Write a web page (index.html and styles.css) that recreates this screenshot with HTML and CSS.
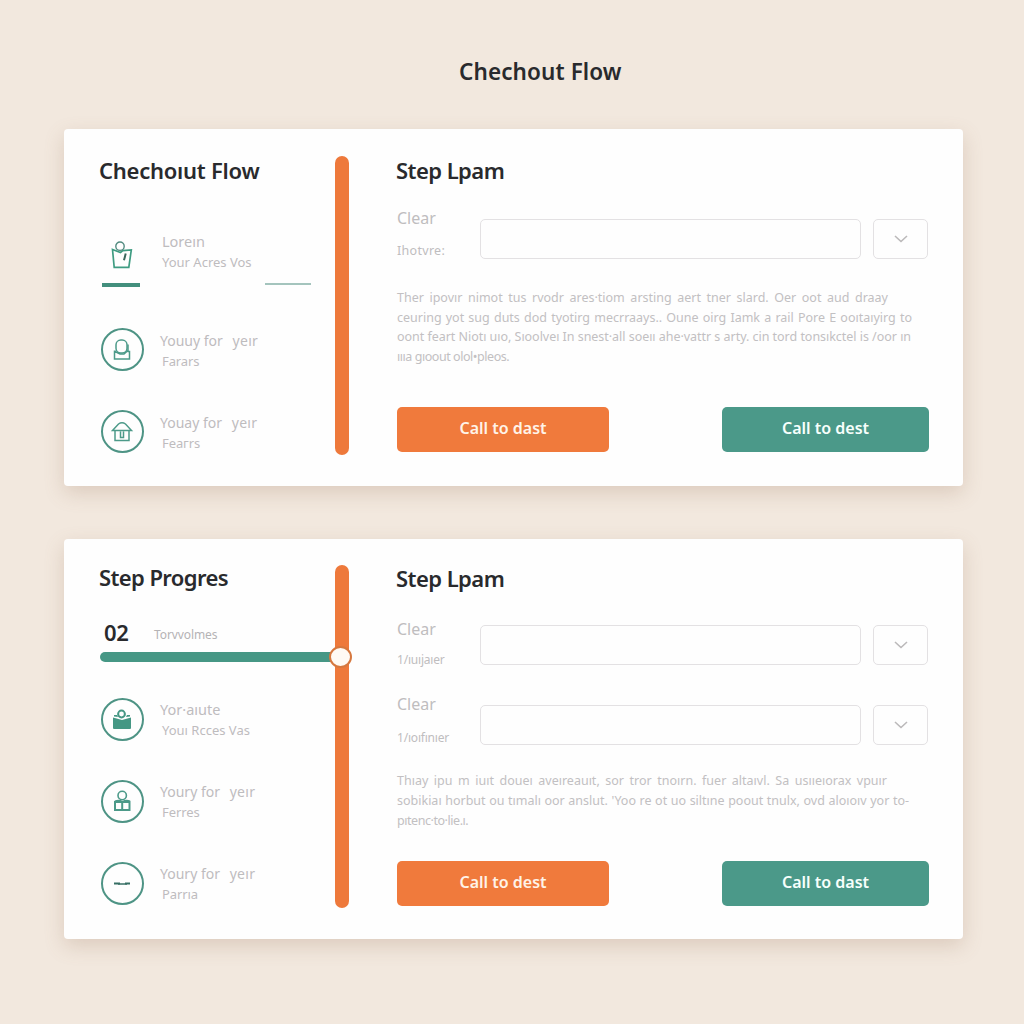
FILE: index.html
```html
<!DOCTYPE html>
<html lang="en">
<head>
<meta charset="utf-8">
<title>Chechout Flow</title>
<link rel="stylesheet" href="styles.css">
</head>
<body>
<h1 class="page-title">Chechout Flow</h1>
<main class="cards">
  <section class="card card-first">
    <div class="steps">
      <h2 class="title title-flow">Chechoıut Flow</h2>
      <div class="step step-active">
        <div class="mark">
          <svg class="bag" width="24" height="32" viewBox="0 0 24 32" fill="none" stroke="#3f9c82" stroke-width="1.7"><path d="M2.5 10.500 4.200 28.300h14.600L21.300 11l-8.500.7-2.300 1.800z"/><path d="M15.700 14.500l-1.700 6.800" stroke="#39665c" stroke-width="2"/><circle cx="10" cy="7.200" r="4.200" stroke="#528b80" stroke-width="1.400"/></svg>
          <i class="underline"></i>
        </div>
        <div class="step-text"><p class="name">Loreın</p><p class="sub">Your Acres Vos</p></div>
        <i class="dash"></i>
      </div>
      <div class="step">
        <div class="ring"><svg width="24" height="24" viewBox="0 0 24 24" fill="none" stroke="#4c9a89" stroke-width="1.500"><path d="M6 13.300H4.500V21h15v-7.500h-2M5 13.500l5 2.500h4l4-3.500V6.500"/><rect x="6" y="2" width="11" height="13" rx="4.800"/></svg></div>
        <div class="step-text"><p class="name n-for">Youuy for <span>yeır</span></p><p class="sub s-one">Farars</p></div>
      </div>
      <div class="step">
        <div class="ring"><svg width="24" height="24" viewBox="0 0 24 24" fill="none" stroke="#4c9a89" stroke-width="1.500"><path d="M2.500 10.500 8.500 4Q12 1.500 15.500 4l6 6.500zM5 10.500V20.500h14v-10M10.500 11.500V17.500h3v-6"/></svg></div>
        <div class="step-text"><p class="name n-for">Youay for <span>yeır</span></p><p class="sub s-one">Feaгrs</p></div>
      </div>
    </div>
    <div class="divider"></div>
    <div class="detail">
      <h2 class="title">Step Lpam</h2>
      <div class="field">
        <div class="labels"><p class="label">Clear</p><p class="hint">Ihotvre:</p></div>
        <div class="input"></div>
        <div class="select"><svg width="14" height="10" viewBox="0 0 14 10" fill="none" stroke="#bbb9ba" stroke-width="1.600"><path d="M1 2l6 5.500L13 2"/></svg></div>
      </div>
      <div class="copy">
        <p class="l1">Ther ipovır nimot tus rvodr ares·tiom arsting aert tner slard. Oer oot aud draay</p>
        <p class="l2">ceuring yot sug duts dod tyotirg mecrraays.. Oune oirg Iamk a rail Pore E ooıtaıyirg to</p>
        <p class="l3">oont feart Niotı uıo, Sıoolveı In snest·all soeıı ahe·vattr s arty. cin tord tonsıkctel is /oor ın</p>
        <p class="l4">ıııa gıoout olol•pleos.</p>
      </div>
      <div class="actions"><div class="btn orange">Call to dast</div><div class="btn green">Call to dest</div></div>
    </div>
  </section>

  <section class="card card-second">
    <div class="steps">
      <h2 class="title title-progress">Step Progres</h2>
      <div class="count"><b>02</b><span>Torvvolmes</span></div>
      <div class="progress"><i class="knob"></i></div>
      <div class="step">
        <div class="ring"><svg width="24" height="24" viewBox="0 0 24 24" fill="#459784"><path d="M3 9.500 12 12l9-2.500V20q0 1-1 1H4q-1 0-1-1zM4 7h3l1 2-4-.5zM17 7h3v1.500L16 9z"/><circle cx="11.500" cy="6" r="3.400" fill="none" stroke="#459784" stroke-width="2"/></svg></div>
        <div class="step-text"><p class="name">Yor·aıute</p><p class="sub">Youı Rcces Vas</p></div>
      </div>
      <div class="step">
        <div class="ring"><svg width="24" height="24" viewBox="0 0 24 24" fill="none" stroke="#4c9a89" stroke-width="1.600"><circle cx="12.200" cy="5.500" r="4.200"/><path d="M5 12h14.500V20H5zM5 11.500q4-1.500 7.500.5Q16 10 20 11.500M12.200 12.500v7.500" stroke-width="2"/></svg></div>
        <div class="step-text"><p class="name n-for">Youry for <span>yeır</span></p><p class="sub s-one">Ferres</p></div>
      </div>
      <div class="step">
        <div class="ring"><svg width="24" height="24" viewBox="0 0 24 24" fill="none" stroke="#376f64" stroke-width="2"><path d="M4 11.500h6M15 11.500h5"/><path d="M8 12h9" stroke-width="1.500"/></svg></div>
        <div class="step-text"><p class="name n-for">Youry for <span>yeır</span></p><p class="sub s-one">Parrıa</p></div>
      </div>
    </div>
    <div class="divider"></div>
    <div class="detail">
      <h2 class="title">Step Lpam</h2>
      <div class="field">
        <div class="labels"><p class="label">Clear</p><p class="hint">1/ıuıjaıer</p></div>
        <div class="input"></div>
        <div class="select"><svg width="14" height="10" viewBox="0 0 14 10" fill="none" stroke="#bbb9ba" stroke-width="1.600"><path d="M1 2l6 5.500L13 2"/></svg></div>
      </div>
      <div class="field field-last">
        <div class="labels"><p class="label">Clear</p><p class="hint">1/ıoıfınıer</p></div>
        <div class="input"></div>
        <div class="select"><svg width="14" height="10" viewBox="0 0 14 10" fill="none" stroke="#bbb9ba" stroke-width="1.600"><path d="M1 2l6 5.500L13 2"/></svg></div>
      </div>
      <div class="copy">
        <p class="m1">Thıay ipu m iuıt doueı aveıreauıt, sor tror tnoırn. fuer altaıvl. Sa usııeıorax vpuır</p>
        <p class="m2">sobikiaı horbut ou tımalı oor anslut. 'Yoo re ot uo siltıne poout tnulx, ovd aloıoıv yor to-</p>
        <p class="m3">pıtenc·to·lie.ı.</p>
      </div>
      <div class="actions"><div class="btn orange">Call to dest</div><div class="btn green">Call to dast</div></div>
    </div>
  </section>
</main>
</body>
</html>
```
FILE: styles.css
```css
* { box-sizing: border-box; }
body {
  margin: 0;
  height: 1024px;
  overflow: hidden;
  background: #f2e8de;
  color: #292a2d;
  font-family: "Noto Sans", "Open Sans", sans-serif;
}
h1, h2, p { margin: 0; }
svg { display: block; }
.page-title {
  height: 129px;
  padding: 57px 0 0 459px;
  font-size: 22.500px;
  line-height: 30px;
  font-weight: 600;
  letter-spacing: .1px;
  white-space: nowrap;
}
.cards { display: flex; flex-direction: column; gap: 53px; padding-left: 64px; }
.card {
  display: flex;
  width: 899px;
  background: #fefefe;
  border-radius: 4px;
  box-shadow: 0 7px 20px rgba(145, 110, 80, .23);
}
.card-first { height: 357px; padding-top: 27px; }
.card-second { height: 400px; padding-top: 26px; }
.steps { width: 271px; padding-left: 35px; }
.title { font-size: 22px; line-height: 28px; font-weight: 600; white-space: nowrap; }
.title-flow { letter-spacing: -.25px; }
.title-progress { margin-top: -2px; letter-spacing: -.6px; }
.divider { width: 14px; border-radius: 7px; background: #ee793b; }
.card-first .divider { height: 299px; }
.card-second .divider { height: 343px; }
.detail { width: 532px; margin-left: 48px; }
.detail .title { margin-left: -1px; letter-spacing: -.55px; }
.card-first .title { margin-bottom: 35px; }
.card-first .detail .title { margin-bottom: 21px; }
.card-second .detail .title { margin: -1px 0 33px -1px; }

.step { display: flex; height: 82px; padding: 10px 0 0 2px; }
.ring {
  display: flex;
  align-items: center;
  justify-content: center;
  width: 43px;
  height: 43px;
  padding-right: 1px;
  border: 2px solid #4e9485;
  border-radius: 50%;
}
.step-text { padding: 2px 0 0 16px; color: #bebcbe; white-space: nowrap; }
.name { font-size: 14.500px; line-height: 21px; }
.sub { padding-left: 2px; font-size: 13px; line-height: 20px; }
.s-one { letter-spacing: -.1px; }
.n-for { font-size: 14px; }
.n-for span { margin-left: 6px; letter-spacing: .3px; }
.card-second .step-text { padding-top: 1px; }
.step-active { height: 99px; padding: 20px 0 0 3px; }
.mark { display: flex; flex-direction: column; align-items: center; width: 38px; }
.bag { margin-left: 1px; }
.underline { width: 38px; height: 4px; margin-top: 12px; background: #438f7d; }
.step-active .step-text { width: 125px; margin-top: -8px; padding: 0 0 0 22px; }
.step-active .sub { padding-left: 0; }
.dash { width: 46px; height: 2px; margin-top: 44px; background: #a4c4bd; }

.count { display: flex; align-items: center; height: 30px; margin-top: 28px; padding-left: 5px; }
.count b { width: 50px; margin-top: -4px; font-size: 22px; font-weight: 600; letter-spacing: -.4px; }
.count span { padding-top: 1px; color: #b5b3b5; font-size: 12px; letter-spacing: -.1px; }
.progress { position: relative; height: 10px; margin: 3px 0 26px 1px; border-radius: 5px; background: #469785; }
.knob {
  position: absolute;
  right: -17px;
  top: -6px;
  width: 23px;
  height: 22px;
  border: 2px solid #d6783f;
  border-radius: 50%;
  background: #fffaf4;
}

.field { display: flex; height: 80px; color: #bfbdbf; }
.labels { width: 83px; margin-top: -8px; white-space: nowrap; }
.label { font-size: 16px; line-height: 24px; }
.hint { padding-top: 9px; font-size: 12.500px; line-height: 20px; }
.card-second .hint { font-size: 12px; letter-spacing: -.2px; }
.input, .select { height: 40px; border: 1.5px solid #e3e1e3; border-radius: 5px; }
.input { width: 381px; }
.select { display: flex; align-items: center; justify-content: center; width: 55px; margin-left: 12px; }
.card-first .field { height: 81px; margin-bottom: 2px; padding-top: 14px; }
.card-first .labels { margin-top: -13px; }
.card-first .hint { padding-top: 11px; letter-spacing: .3px; }
.field-last .labels { margin-top: -13px; }
.field-last .hint { padding-top: 12px; }
.field-last { height: 66px; }

.copy { color: #c2c0c2; font-size: 12.500px; line-height: 19.700px; white-space: nowrap; }
.copy p { text-align: justify; text-align-last: justify; }
.card-second .copy { line-height: 20.200px; }
.l1 { width: 491px; }
.l2 { width: 515px; }
.l3 { width: 514px; letter-spacing: -.04px; }
.l4 { width: 112px; letter-spacing: -.45px; }
.m1 { width: 490px; }
.m2 { width: 512px; }
.m3 { width: 72px; letter-spacing: -.45px; }
.actions { display: flex; justify-content: space-between; }
.btn {
  height: 45px;
  border-radius: 5px;
  color: #fff3e8;
  font-size: 16px;
  font-weight: 600;
  line-height: 43px;
  text-align: center;
}
.orange { width: 212px; background: #f07a3c; }
.green { width: 207px; background: #4b9989; color: #f7fffc; }
.card-first .actions { margin-top: 40px; }
.card-second .actions { margin-top: 29px; }
```
